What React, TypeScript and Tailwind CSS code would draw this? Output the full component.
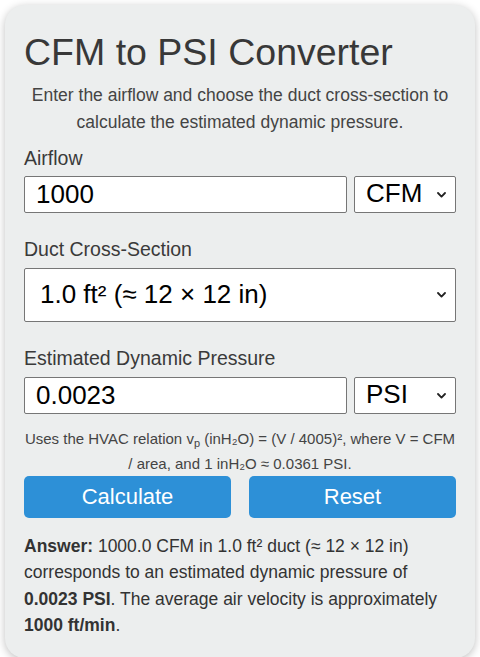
import React, { useState } from 'react';

const Chevron = () => (
    <svg
        className="pointer-events-none absolute right-[10px] top-1/2 -translate-y-1/2"
        width="9"
        height="6"
        viewBox="0 0 9 6"
        fill="none"
    >
        <polyline points="1,1 4.5,4.6 8,1" stroke="#222" strokeWidth="1.8" strokeLinecap="round" strokeLinejoin="round" />
    </svg>
);

interface SelectBoxProps {
    value: string;
    options: string[];
    onChange: (v: string) => void;
    className: string;
    wrapClass: string;
}

const SelectBox: React.FC<SelectBoxProps> = ({ value, options, onChange, className, wrapClass }) => (
    <div className={`relative ${wrapClass}`}>
        <select
            value={value}
            onChange={e => onChange(e.target.value)}
            className={`w-full appearance-none bg-white border border-[#767676] rounded-[2px] text-black text-[26px] leading-[30px] outline-none ${className}`}
        >
            {options.map(o => (
                <option key={o} value={o}>{o}</option>
            ))}
        </select>
        <Chevron />
    </div>
);

export default function App() {
    const [flow, setFlow] = useState('1000');
    const [flowUnit, setFlowUnit] = useState('CFM');
    const [duct, setDuct] = useState('1.0 ft² (≈ 12 × 12 in)');
    const [pressure, setPressure] = useState('0.0023');
    const [pUnit, setPUnit] = useState('PSI');

    return (
        <div className="p-[5px] bg-white" style={{ fontFamily: '"Liberation Sans", Arial, sans-serif' }}>
            <div className="rounded-[20px] bg-[#eceeee] shadow-[0_2px_8px_rgba(0,0,0,0.25)] px-[19px] pt-[25px] pb-[20px] text-[17.5px] text-[#333]">
                <h1 className="text-[37.5px] leading-[44px] font-normal text-[#383838]">CFM to PSI Converter</h1>
                <p className="mt-[8px] text-center leading-[26.5px] text-[#444]">
                    Enter the airflow and choose the duct cross-section to calculate the estimated dynamic pressure.
                </p>

                <label className="block mt-[11px] mb-[6px] text-[19.5px] leading-[24px] text-[#3a3a3a]">Airflow</label>
                <div className="flex gap-[7px]">
                    <input
                        value={flow}
                        onChange={e => setFlow(e.target.value)}
                        className="flex-1 min-w-0 h-[37px] bg-white border border-[#767676] rounded-[2px] pl-[11px] text-[26px] text-black outline-none"
                    />
                    <SelectBox
                        value={flowUnit}
                        options={['CFM', 'm³/h', 'L/s']}
                        onChange={setFlowUnit}
                        wrapClass="w-[102px]"
                        className="h-[37px] pl-[11px] pt-0 pb-[4px]"
                    />
                </div>

                <label className="block mt-[24px] mb-[7px] text-[19.5px] leading-[24px] text-[#3a3a3a]">Duct Cross-Section</label>
                <SelectBox
                    value={duct}
                    options={['0.5 ft² (≈ 8.5 × 8.5 in)', '1.0 ft² (≈ 12 × 12 in)', '2.0 ft² (≈ 17 × 17 in)']}
                    onChange={setDuct}
                    wrapClass="w-full"
                    className="h-[54px] pl-[15px] pb-[2px]"
                />

                <label className="block mt-[24px] mb-[7px] text-[19.5px] leading-[24px] text-[#3a3a3a]">Estimated Dynamic Pressure</label>
                <div className="flex gap-[7px]">
                    <input
                        value={pressure}
                        onChange={e => setPressure(e.target.value)}
                        className="flex-1 min-w-0 h-[37px] bg-white border border-[#767676] rounded-[2px] pl-[11px] text-[26px] text-black outline-none"
                    />
                    <SelectBox
                        value={pUnit}
                        options={['PSI', 'inH₂O', 'Pa']}
                        onChange={setPUnit}
                        wrapClass="w-[102px]"
                        className="h-[37px] pl-[11px] pt-0 pb-[4px]"
                    />
                </div>

                <p className="mt-[12px] text-center text-[15px] leading-[25px] text-[#444]">
                    Uses the HVAC relation v<sub className="text-[11px] leading-none">p</sub> (inH₂O) = (V / 4005)², where V = CFM / area, and 1 inH₂O ≈ 0.0361 PSI.
                </p>

                <div className="flex gap-[18px]">
                    <button className="flex-1 h-[42px] pb-[2px] rounded-[5px] bg-[#2d90d7] text-white text-[22px]">Calculate</button>
                    <button className="flex-1 h-[42px] pb-[2px] rounded-[5px] bg-[#2d90d7] text-white text-[22px]">Reset</button>
                </div>

                <p className="mt-[15px] leading-[26.25px] text-[#333]">
                    <b>Answer:</b> 1000.0 CFM in 1.0 ft² duct (≈ 12 × 12 in) corresponds to an estimated dynamic pressure of <b>0.0023 PSI</b>. The average air velocity is approximately <b>1000 ft/min</b>.
                </p>
            </div>
        </div>
    );
}
